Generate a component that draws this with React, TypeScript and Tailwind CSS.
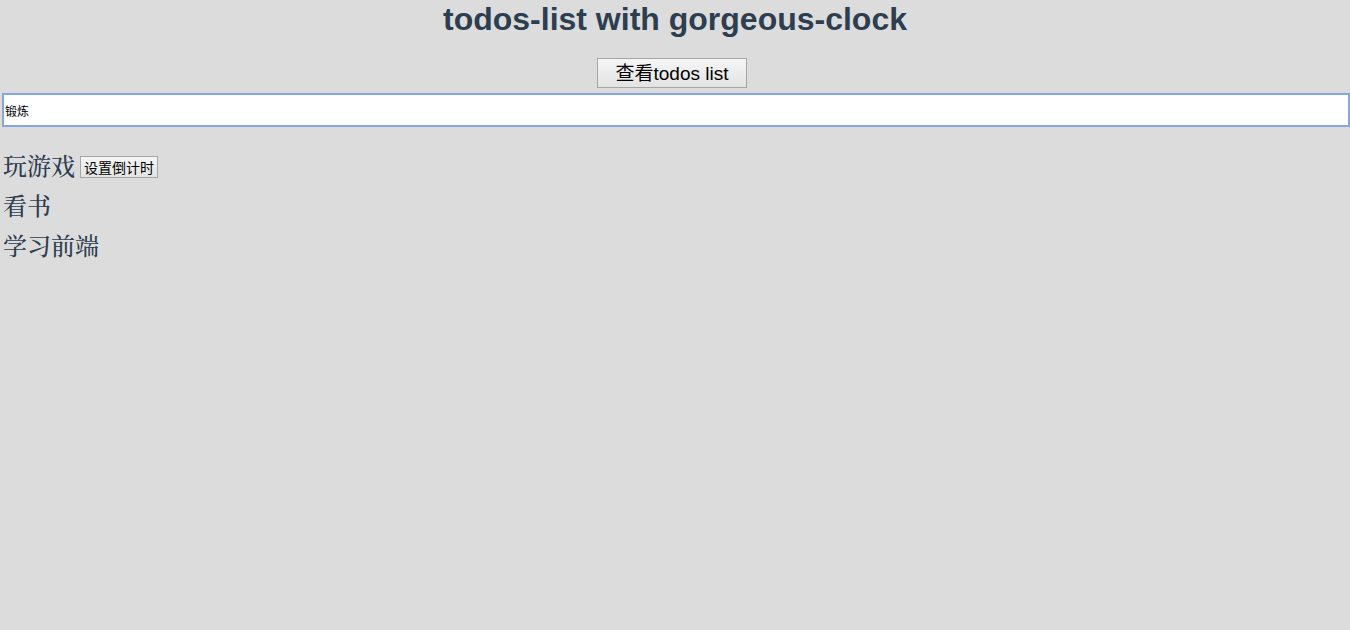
import React from "react";

export default function App() {
  const items = ["玩游戏", "看书", "学习前端"];
  return (
    <div className="min-h-[630px] w-full bg-[#dcdcdc] text-[#2c3e50]">
      <h1 className="pt-[1px] text-center text-[32px] font-bold leading-[36px] [font-family:'Liberation_Sans',Arial,sans-serif]">
        todos-list with gorgeous-clock
      </h1>
      <div className="mt-[21px] flex justify-center">
        <button className="mr-[6px] h-[30px] w-[150px] border border-[#a6a6a6] bg-gradient-to-b from-[#f6f6f6] to-[#e3e3e3] text-[19px] leading-none text-black [font-family:'Liberation_Sans','Noto_Sans_CJK_SC',sans-serif]">
          查看todos list
        </button>
      </div>
      <div className="mt-[5px] pl-[2px]">
        <input
          className="box-border h-[34px] w-full border-2 border-[#86a6e3] bg-white px-[1px] text-[12px] text-black outline-none [font-family:'Noto_Sans_CJK_SC',sans-serif]"
          defaultValue="锻炼"
        />
      </div>
      <ul className="mt-[25px] pl-[3px] [font-family:'Noto_Serif_CJK_SC','Noto_Sans_CJK_SC',serif]">
        {items.map((t, i) => (
          <li key={t} className="flex h-[40px] items-start">
            <span className="text-[24px] font-medium leading-[26px]">{t}</span>
            {i === 0 && (
              <button className="ml-[5px] mt-[4px] h-[22px] border border-[#a6a6a6] bg-gradient-to-b from-[#f6f6f6] to-[#e3e3e3] px-[3px] text-[14px] leading-none text-black [font-family:'Noto_Sans_CJK_SC',sans-serif]">
                设置倒计时
              </button>
            )}
          </li>
        ))}
      </ul>
    </div>
  );
}
